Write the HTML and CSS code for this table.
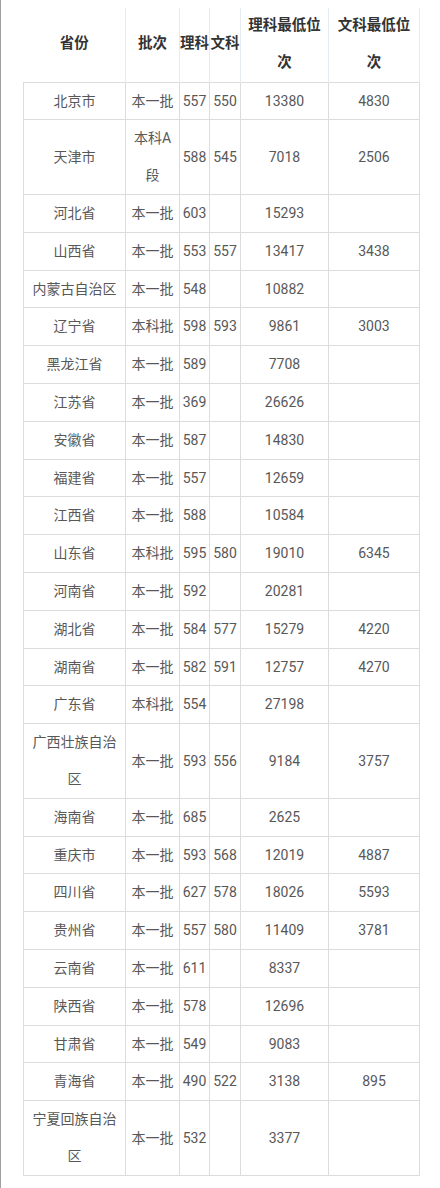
FILE: index.html
```html
<!DOCTYPE html>
<html lang="zh-CN">
<head>
<meta charset="utf-8">
<title>各省录取分数线</title>
<link rel="stylesheet" href="styles.css">
</head>
<body>
<div class="page">
  <table class="score-table">
    <colgroup>
      <col class="c-prov"><col class="c-batch"><col class="c-li"><col class="c-wen"><col class="c-lirank"><col class="c-wenrank">
    </colgroup>
    <thead>
      <tr>
        <th class="first">省份</th>
        <th>批次</th>
        <th class="tight">理科</th>
        <th class="tight">文科</th>
        <th>理科最低位次</th>
        <th>文科最低位次</th>
      </tr>
    </thead>
    <tbody>
      <tr><td>北京市</td><td>本一批</td><td class="tight">557</td><td class="tight">550</td><td>13380</td><td>4830</td></tr>
      <tr><td>天津市</td><td>本科A段</td><td class="tight">588</td><td class="tight">545</td><td>7018</td><td>2506</td></tr>
      <tr><td>河北省</td><td>本一批</td><td class="tight">603</td><td class="tight"></td><td>15293</td><td></td></tr>
      <tr><td>山西省</td><td>本一批</td><td class="tight">553</td><td class="tight">557</td><td>13417</td><td>3438</td></tr>
      <tr><td>内蒙古自治区</td><td>本一批</td><td class="tight">548</td><td class="tight"></td><td>10882</td><td></td></tr>
      <tr><td>辽宁省</td><td>本科批</td><td class="tight">598</td><td class="tight">593</td><td>9861</td><td>3003</td></tr>
      <tr><td>黑龙江省</td><td>本一批</td><td class="tight">589</td><td class="tight"></td><td>7708</td><td></td></tr>
      <tr><td>江苏省</td><td>本一批</td><td class="tight">369</td><td class="tight"></td><td>26626</td><td></td></tr>
      <tr><td>安徽省</td><td>本一批</td><td class="tight">587</td><td class="tight"></td><td>14830</td><td></td></tr>
      <tr><td>福建省</td><td>本一批</td><td class="tight">557</td><td class="tight"></td><td>12659</td><td></td></tr>
      <tr><td>江西省</td><td>本一批</td><td class="tight">588</td><td class="tight"></td><td>10584</td><td></td></tr>
      <tr><td>山东省</td><td>本科批</td><td class="tight">595</td><td class="tight">580</td><td>19010</td><td>6345</td></tr>
      <tr><td>河南省</td><td>本一批</td><td class="tight">592</td><td class="tight"></td><td>20281</td><td></td></tr>
      <tr><td>湖北省</td><td>本一批</td><td class="tight">584</td><td class="tight">577</td><td>15279</td><td>4220</td></tr>
      <tr><td>湖南省</td><td>本一批</td><td class="tight">582</td><td class="tight">591</td><td>12757</td><td>4270</td></tr>
      <tr><td>广东省</td><td>本科批</td><td class="tight">554</td><td class="tight"></td><td>27198</td><td></td></tr>
      <tr><td>广西壮族自治区</td><td>本一批</td><td class="tight">593</td><td class="tight">556</td><td>9184</td><td>3757</td></tr>
      <tr><td>海南省</td><td>本一批</td><td class="tight">685</td><td class="tight"></td><td>2625</td><td></td></tr>
      <tr><td>重庆市</td><td>本一批</td><td class="tight">593</td><td class="tight">568</td><td>12019</td><td>4887</td></tr>
      <tr><td>四川省</td><td>本一批</td><td class="tight">627</td><td class="tight">578</td><td>18026</td><td>5593</td></tr>
      <tr><td>贵州省</td><td>本一批</td><td class="tight">557</td><td class="tight">580</td><td>11409</td><td>3781</td></tr>
      <tr><td>云南省</td><td>本一批</td><td class="tight">611</td><td class="tight"></td><td>8337</td><td></td></tr>
      <tr><td>陕西省</td><td>本一批</td><td class="tight">578</td><td class="tight"></td><td>12696</td><td></td></tr>
      <tr><td>甘肃省</td><td>本一批</td><td class="tight">549</td><td class="tight"></td><td>9083</td><td></td></tr>
      <tr><td>青海省</td><td>本一批</td><td class="tight">490</td><td class="tight">522</td><td>3138</td><td>895</td></tr>
      <tr><td>宁夏回族自治区</td><td>本一批</td><td class="tight">532</td><td class="tight"></td><td>3377</td><td></td></tr>
    </tbody>
  </table>
</div>
</body>
</html>
```

FILE: styles.css
```css
html, body {
  margin: 0;
  padding: 0;
  background: #ffffff;
}

.page {
  min-height: 1188px;
  box-sizing: border-box;
  border-left: 1px solid #a0a0a0;
  padding: 8px 0 0 22px;
  font-family: Roboto, "Noto Sans CJK SC", sans-serif;
  font-size: 14px;
  color: #585858;
}

.score-table {
  border-collapse: collapse;
  table-layout: fixed;
  width: 396px;
}

.c-prov { width: 102px; }
.c-batch { width: 54px; }
.c-li { width: 30px; }
.c-wen { width: 31px; }
.c-lirank { width: 88px; }
.c-wenrank { width: 91px; }

.score-table th,
.score-table td {
  text-align: center;
  vertical-align: middle;
  line-height: 36.8px;
  padding: 0 4px;
}

.score-table th {
  font-size: 14.5px;
  font-weight: bold;
  color: #333333;
  border-left: 1px solid #e3eaf0;
  border-right: 1px solid #e3eaf0;
}

.score-table th.first {
  border-left: none;
}

.score-table td {
  border: 1px solid #dcdcdc;
}

.score-table .tight {
  padding: 0;
}
```
